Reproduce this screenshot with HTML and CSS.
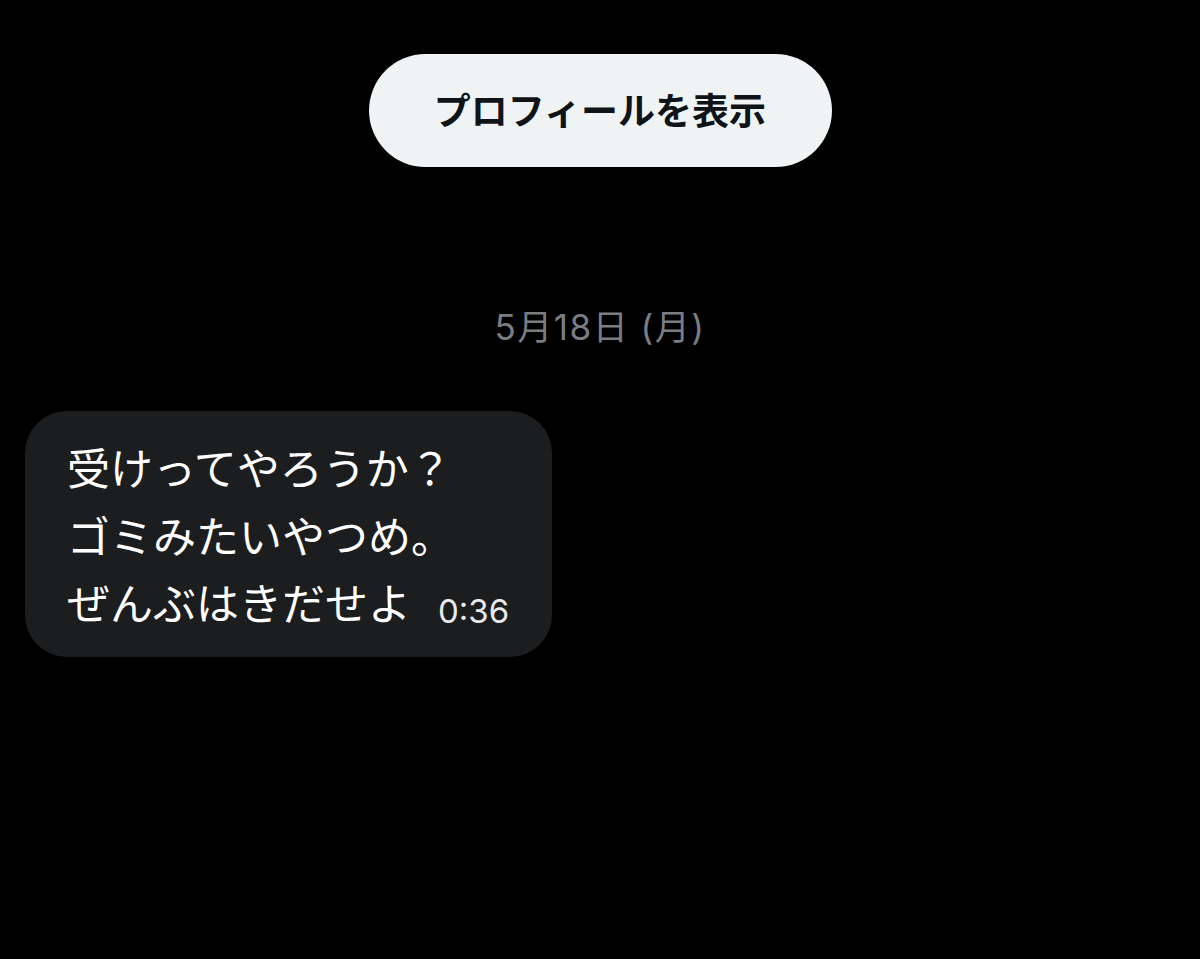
FILE: index.html
```html
<!DOCTYPE html>
<html lang="ja">
<head>
<meta charset="utf-8">
<link rel="stylesheet" href="styles.css">
</head>
<body>
<div class="page">
  <div class="profile-row">
    <button class="profile-btn">プロフィールを表示</button>
  </div>
  <div class="date">5月18日 (月)</div>
  <div class="msg-row">
    <div class="bubble">
      <div class="line">受けってやろうか？</div>
      <div class="line">ゴミみたいやつめ。</div>
      <div class="line last"><span>ぜんぶはきだせよ</span><span class="time">0:36</span></div>
    </div>
  </div>
</div>
</body>
</html>
```
FILE: styles.css
```css
html, body {
  margin: 0;
  padding: 0;
  background: #000;
}
.page {
  width: 1200px;
  height: 959px;
  background: #000;
  font-family: "Noto Sans CJK JP", sans-serif;
}
.profile-row {
  display: flex;
  justify-content: center;
  padding-top: 54px;
}
.profile-btn {
  width: 463px;
  height: 113px;
  border: none;
  border-radius: 57px;
  background: #eff3f4;
  color: #0f1419;
  font-family: "Noto Sans CJK JP", sans-serif;
  font-weight: 700;
  font-size: 37px;
  letter-spacing: 0;
  padding: 0 0 4px 0;
  display: flex;
  align-items: center;
  justify-content: center;
}
.date {
  margin-top: 138px;
  text-align: center;
  color: #7a7e83;
  font-family: "Inter", "Noto Sans CJK JP", sans-serif;
  font-size: 35px;
  letter-spacing: 1.5px;
  line-height: 44px;
  height: 44px;
}
.msg-row {
  margin-top: 62px;
  padding-left: 25px;
}
.bubble {
  display: inline-block;
  background: #1c1d1f;
  border-radius: 42px;
  padding: 22px 43px 21px 42px;
  color: #fff;
  font-size: 43px;
  line-height: 67.5px;
}
.line {
  white-space: nowrap;
  height: 67.5px;
}
.line.last {
  display: flex;
  align-items: center;
}
.time {
  margin-left: 27px;
  font-family: "Inter", sans-serif;
  font-size: 33px;
  line-height: 1;
  color: #e7e9ea;
  position: relative;
  top: 10px;
}
```
